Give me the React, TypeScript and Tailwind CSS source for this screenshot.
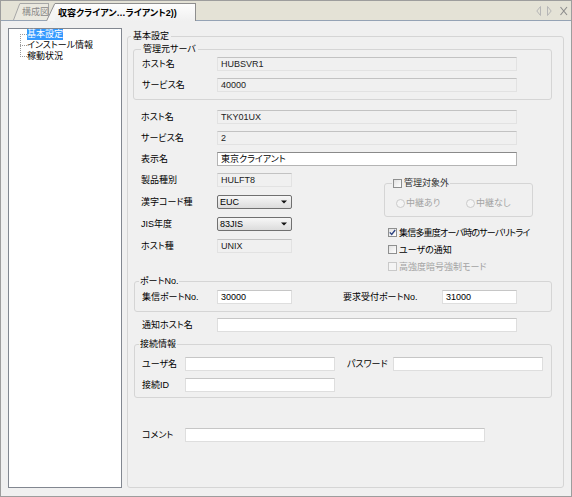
import React from "react";

const ReadField: React.FC<{ value?: string; width: string }> = ({ value, width }) => (
  <div
    className={`${width} h-[14px] border border-[#e2e2e2] border-t-[#c2c2c2] bg-[#f0f0f0] pl-[3px] flex items-center text-[#222] whitespace-nowrap overflow-hidden`}
  >
    {value}
  </div>
);

const TextField: React.FC<{ value?: string; width: string; strong?: boolean }> = ({
  value,
  width,
  strong,
}) => (
  <div
    className={`${width} h-[14px] border bg-white pl-[3px] flex items-center whitespace-nowrap overflow-hidden ${
      strong ? "border-[#b4b4b4] border-t-[#8a8a8a]" : "border-[#dedede] border-t-[#c6c6c6]"
    }`}
  >
    {value}
  </div>
);

const Select: React.FC<{ value: string }> = ({ value }) => (
  <div className="w-[75px] h-[14px] rounded-[2px] border border-[#707070] bg-linear-to-b from-[#f7f7f7] to-[#dcdcdc] flex items-center pl-[2px] pr-[4px]">
    <span className="flex-1">{value}</span>
    <svg width="6" height="4" viewBox="0 0 6 4">
      <path d="M0 0.5 H6 L3 3.5 Z" fill="#111" />
    </svg>
  </div>
);

const CheckBox: React.FC<{ checked?: boolean; disabled?: boolean }> = ({ checked, disabled }) => (
  <div
    className={`w-[9px] h-[9px] shrink-0 border flex items-center justify-center ${
      disabled
        ? "border-[#c9c9c9] bg-[#f4f4f4]"
        : "border-[#8e8f8f] bg-linear-to-br from-[#e2e2e2] to-white"
    }`}
  >
    {checked && (
      <svg width="7" height="7" viewBox="0 0 7 7">
        <path d="M0.8 3.4 L2.7 5.5 L6.2 1" fill="none" stroke="#2d4382" strokeWidth="1.4" />
      </svg>
    )}
  </div>
);

const Radio: React.FC = () => (
  <div className="w-[9px] h-[9px] shrink-0 rounded-full border border-[#cbcbcb] bg-[#f4f4f4]" />
);

const Row: React.FC<{ label: string; h: string; children: React.ReactNode }> = ({
  label,
  h,
  children,
}) => (
  <div className={`flex items-center ${h}`}>
    <span className="w-[89px] pl-[13px] shrink-0 whitespace-nowrap">{label}</span>
    {children}
  </div>
);

export default function App() {
  return (
    <div className="w-[572px] h-[497px] border border-[#9d9d9d] bg-[#f0f0f0] flex flex-col overflow-hidden text-[9px] leading-[12px] text-black font-['Liberation_Sans','Noto_Sans_CJK_JP',sans-serif] [font-feature-settings:'palt']">
      {/* tab strip */}
      <div className="h-[20px] shrink-0 bg-[#e4e2d6] border-b border-[#95a3b5] flex items-end pl-[12px]">
        <div className="flex items-end h-[17px]">
          <svg width="7" height="17" viewBox="0 0 7 17" className="block">
            <path d="M0 17 L7 0 V17 Z" fill="#eae8df" />
            <path d="M0.5 17 L6.8 0.5" stroke="#a6a6a6" fill="none" />
          </svg>
          <div className="w-[29px] h-[17px] border-t border-r border-[#a6a6a6] bg-[#eae8df] pl-[2px] flex items-center text-[#8a8a8a] whitespace-nowrap">
            構成図
          </div>
        </div>
        <div className="flex items-end h-[18px] -ml-[3px] -mb-[1px] relative z-10">
          <svg width="9" height="18" viewBox="0 0 9 18" className="block">
            <path d="M0 18 L9 0 V18 Z" fill="#f5f5f5" />
            <path d="M0.5 18 L8.8 0.5" stroke="#8e8e8e" fill="none" />
          </svg>
          <div className="w-[141px] h-[18px] border-t border-r border-[#8e8e8e] bg-linear-to-b from-[#fdfdfd] to-[#f0f0f0] pl-[3px] flex items-center font-bold whitespace-nowrap">
            収容クライアン…ライアント2))
          </div>
        </div>
        <svg width="32" height="10" viewBox="0 0 32 10" className="ml-auto mr-[3px] self-center">
          <path d="M4.5 0.5 L0.8 5 L4.5 9.5 Z" fill="none" stroke="#b6b6b6" />
          <path d="M11.5 0.5 L15.2 5 L11.5 9.5 Z" fill="none" stroke="#b6b6b6" />
          <path d="M24.5 1 L31 9 M31 1 L24.5 9" stroke="#8c8c8c" strokeWidth="1.1" />
        </svg>
      </div>

      {/* body */}
      <div className="flex-1 flex pt-[7px] pl-[7px]">
        {/* tree */}
        <div className="w-[114px] h-[460px] border border-[#828790] bg-white flex items-start">
          <svg width="18" height="33" viewBox="0 0 18 33" className="block shrink-0">
            <g stroke="#9a9a9a" strokeDasharray="1 1" fill="none">
              <path d="M11.5 5 V28" />
              <path d="M11 5.5 H18 M11 16.5 H18 M11 27.5 H18" />
            </g>
          </svg>
          <div className="flex flex-col">
            <span className="h-[11px] leading-[11px] bg-[#3399ff] text-white self-start">基本設定</span>
            <span className="h-[11px] leading-[11px]">インストール情報</span>
            <span className="h-[11px] leading-[11px]">稼動状況</span>
          </div>
        </div>

        {/* main group */}
        <fieldset className="ml-[5px] mt-[2px] w-[437px] h-[458px] border border-[#d5d5d5] rounded-[3px]">
          <legend className="ml-[3px] px-[2px]">基本設定</legend>

          <fieldset className="ml-[5px] mt-[1px] w-[419px] border border-[#d5d5d5] rounded-[3px] pb-[2px]">
            <legend className="ml-[7px] px-[2px]">管理元サーバ</legend>
            <div className="flex items-center h-[18px]">
              <span className="w-[83px] pl-[8px]">ホスト名</span>
              <ReadField value="HUBSVR1" width="w-[300px]" />
            </div>
            <div className="flex items-center h-[24px]">
              <span className="w-[83px] pl-[8px]">サービス名</span>
              <ReadField value="40000" width="w-[300px]" />
            </div>
          </fieldset>

          <div className="mt-[6px]">
            <Row label="ホスト名" h="h-[21px]">
              <ReadField value="TKY01UX" width="w-[300px]" />
            </Row>
            <Row label="サービス名" h="h-[21px]">
              <ReadField value="2" width="w-[300px]" />
            </Row>
            <Row label="表示名" h="h-[21px]">
              <TextField value="東京クライアント" width="w-[300px]" strong />
            </Row>
          </div>

          <div className="flex items-start">
            <div className="w-[256px] shrink-0">
              <Row label="製品種別" h="h-[22px]">
                <ReadField value="HULFT8" width="w-[75px]" />
              </Row>
              <Row label="漢字コード種" h="h-[22px]">
                <Select value="EUC" />
              </Row>
              <Row label="JIS年度" h="h-[22px]">
                <Select value="83JIS" />
              </Row>
              <Row label="ホスト種" h="h-[22px]">
                <ReadField value="UNIX" width="w-[75px]" />
              </Row>
            </div>

            <div className="pt-[8px]">
              <fieldset className="w-[149px] h-[40px] border border-[#d5d5d5] rounded-[3px]">
                <legend className="ml-[7px] px-[1px] flex items-center gap-[2px] text-[#333]">
                  <CheckBox />
                  <span>管理対象外</span>
                </legend>
                <div className="mt-[7px] h-[14px] flex items-center pl-[11px] text-[#a3a3a3]">
                  <div className="w-[70px] flex items-center gap-[1px]">
                    <Radio />
                    <span>中継あり</span>
                  </div>
                  <div className="flex items-center gap-[1px]">
                    <Radio />
                    <span>中継なし</span>
                  </div>
                </div>
              </fieldset>
              <div className="mt-[7px] pl-[4px]">
                <div className="h-[17px] flex items-center gap-[2px] whitespace-nowrap">
                  <CheckBox checked />
                  <span className="tracking-[-0.8px]">集信多重度オーバ時のサーバリトライ</span>
                </div>
                <div className="h-[17px] flex items-center gap-[2px]">
                  <CheckBox />
                  <span>ユーザの通知</span>
                </div>
                <div className="h-[17px] flex items-center gap-[2px] text-[#a3a3a3]">
                  <CheckBox disabled />
                  <span>高強度暗号強制モード</span>
                </div>
              </div>
            </div>
          </div>

          <fieldset className="ml-[6px] w-[418px] border border-[#d5d5d5] rounded-[3px] pb-[4px]">
            <legend className="ml-[4px] px-[1px]">ポートNo.</legend>
            <div className="flex items-center h-[20px]">
              <span className="w-[82px] pl-[7px] shrink-0">集信ポートNo.</span>
              <TextField value="30000" width="w-[75px]" />
              <span className="ml-[51px] w-[99px] shrink-0">要求受付ポートNo.</span>
              <TextField value="31000" width="w-[75px]" />
            </div>
          </fieldset>

          <div className="mt-[3px] flex items-center h-[20px]">
            <span className="w-[89px] pl-[14px] shrink-0">通知ホスト名</span>
            <TextField width="w-[300px]" />
          </div>

          <fieldset className="mt-[3px] ml-[6px] w-[418px] border border-[#d5d5d5] rounded-[3px] pt-[3px] pb-[2px]">
            <legend className="ml-[4px] px-[1px]">接続情報</legend>
            <div className="flex items-center h-[21px]">
              <span className="w-[50px] pl-[7px] shrink-0">ユーザ名</span>
              <TextField width="w-[150px]" />
              <span className="ml-[12px] w-[46px] shrink-0">パスワード</span>
              <TextField width="w-[150px]" />
            </div>
            <div className="flex items-center h-[21px]">
              <span className="w-[50px] pl-[7px] shrink-0">接続ID</span>
              <TextField width="w-[150px]" />
            </div>
          </fieldset>

          <div className="mt-[27px] flex items-center h-[20px]">
            <span className="w-[57px] pl-[14px] shrink-0">コメント</span>
            <TextField width="w-[300px]" />
          </div>
        </fieldset>
      </div>
    </div>
  );
}
